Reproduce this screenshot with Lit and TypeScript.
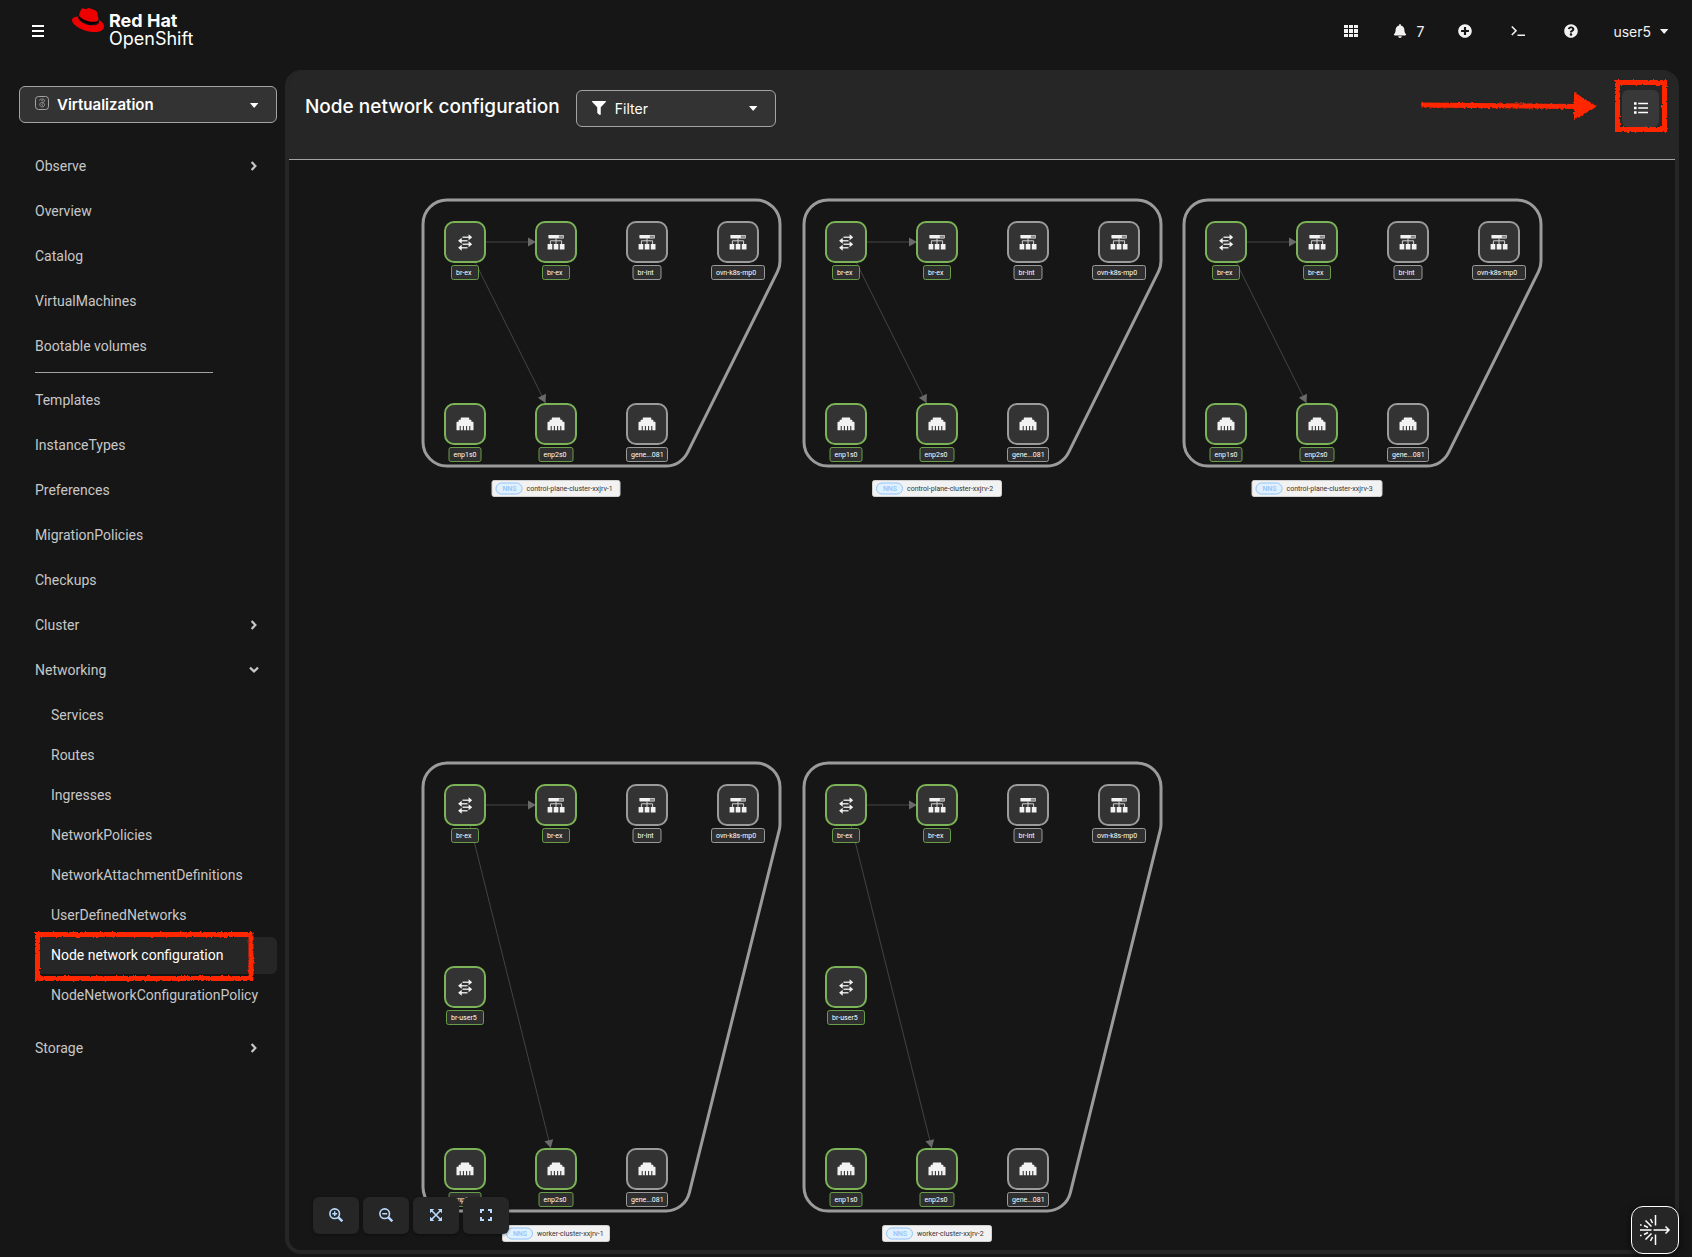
import { LitElement, html, svg, css } from "lit";
import { customElement, property } from "lit/decorators.js";
import { classMap } from "lit/directives/class-map.js";

type IconName =
  | "bars" | "grid" | "bell" | "plus" | "terminal" | "help" | "caret" | "chevron"
  | "filter" | "list" | "zoomIn" | "zoomOut" | "expand" | "fullscreen" | "virtualization" | "burst";

const ICONS: Record<IconName, { box: string; body: unknown }> = {
  bars: { box: "0 0 14 14", body: svg`<path d="M1 2h12M1 7h12M1 12h12" stroke="currentColor" stroke-width="2"/>` },
  grid: {
    box: "0 0 14 14",
    body: svg`<path fill="currentColor" d="M0 1h4v3H0zM5 1h4v3H5zM10 1h4v3h-4zM0 5h4v4H0zM5 5h4v4H5zM10 5h4v4h-4zM0 10h4v3H0zM5 10h4v3H5zM10 10h4v3h-4z"/>`,
  },
  bell: {
    box: "0 0 448 512",
    body: svg`<path fill="currentColor" d="M224 512c35.300 0 64-28.700 64-64H160c0 35.300 28.600 64 64 64zm215.400-149.700c-19.300-20.800-55.500-52-55.500-154.300 0-77.700-54.500-139.900-127.900-155.200V32c0-17.700-14.300-32-32-32s-32 14.300-32 32v20.800C118.600 68.100 64.100 130.300 64.100 208c0 102.300-36.200 133.500-55.500 154.300-6 6.400-8.700 14.100-8.600 21.700.1 16.400 13 32 32.100 32h383.800c19.100 0 32-15.600 32.100-32 .1-7.600-2.600-15.300-8.600-21.700z"/>`,
  },
  plus: {
    box: "0 0 512 512",
    body: svg`<path fill="currentColor" d="M256 8C119 8 8 119 8 256s111 248 248 248 248-111 248-248S393 8 256 8zm144 276c0 6.600-5.400 12-12 12h-92v92c0 6.600-5.400 12-12 12h-56c-6.600 0-12-5.400-12-12v-92h-92c-6.600 0-12-5.400-12-12v-56c0-6.600 5.400-12 12-12h92v-92c0-6.600 5.400-12 12-12h56c6.600 0 12 5.400 12 12v92h92c6.600 0 12 5.400 12 12v56z"/>`,
  },
  terminal: {
    box: "0 0 14 14",
    body: svg`<path d="M.8 2.500 5 6.700.8 11M6.500 11.300H14" fill="none" stroke="currentColor" stroke-width="1.600"/>`,
  },
  help: {
    box: "0 0 512 512",
    body: svg`<path fill="currentColor" d="M504 256c0 137-111 248-248 248S8 393 8 256C8 119.100 119 8 256 8s248 111.100 248 248zM262.700 90c-54.500 0-89.300 23-116.500 63.800-3.500 5.300-2.400 12.400 2.700 16.300l34.700 26.300c5.200 3.900 12.600 3 16.700-2.100 17.900-22.700 30.100-35.800 57.300-35.800 20.400 0 45.700 13.100 45.700 33 0 15-12.400 22.700-32.500 34C247.100 238.500 216 254.900 216 296v4c0 6.600 5.400 12 12 12h56c6.600 0 12-5.400 12-12v-1.300c0-28.500 83.200-29.600 83.200-106.700 0-58-60.200-102-116.500-102zM256 338c-25.400 0-46 20.600-46 46 0 25.400 20.600 46 46 46s46-20.600 46-46c0-25.400-20.600-46-46-46z"/>`,
  },
  caret: { box: "0 0 14 14", body: svg`<path d="M3 5h8.400L7.800 9.300a.9.9 0 0 1-1.300 0z" fill="currentColor"/>` },
  chevron: {
    box: "0 0 14 14",
    body: svg`<path d="M4.600 3 8.400 7l-3.800 4" fill="none" stroke="currentColor" stroke-width="2.200"/>`,
  },
  filter: {
    box: "0 0 512 512",
    body: svg`<path fill="currentColor" d="M487.976 0H24.028C2.710 0-8.047 25.866 7.058 40.971L192 225.941V432c0 7.831 3.821 15.170 10.237 19.662l80 55.980C298.020 518.690 320 507.493 320 487.980V225.941l184.947-184.970C520.021 25.896 509.338 0 487.976 0z"/>`,
  },
  list: {
    box: "0 0 14 14",
    body: svg`<path d="M0 2.500h2.600M0 7h2.600M0 11.500h2.600" stroke="currentColor" stroke-width="2.600"/><path d="M4.200 2.500H14M4.200 7H14M4.200 11.500H14" stroke="currentColor" stroke-width="1.600"/>`,
  },
  zoomIn: {
    box: "0 0 14 14",
    body: svg`<path d="M9.400 9.400 13.300 13.300" stroke="currentColor" stroke-width="2.400"/><circle cx="5.700" cy="5.700" r="4.800" fill="none" stroke="currentColor" stroke-width="1.600"/><path d="M5.700 3.300v4.800M3.300 5.700h4.800" stroke="currentColor" stroke-width="1.400"/>`,
  },
  zoomOut: {
    box: "0 0 14 14",
    body: svg`<path d="M9.400 9.400 13.300 13.300" stroke="currentColor" stroke-width="2.400"/><circle cx="5.700" cy="5.700" r="4.800" fill="none" stroke="currentColor" stroke-width="1.600"/><path d="M3.300 5.700h4.800" stroke="currentColor" stroke-width="1.600"/>`,
  },
  expand: {
    box: "0 0 14 14",
    body: svg`<path d="M1 5.300V1h4.300zM8.700 1H13v4.300zM1 8.700V13h4.300zM8.700 13H13V8.700z" fill="currentColor"/><path d="m2.500 2.500 9 9M11.500 2.500l-9 9" stroke="currentColor" stroke-width="1.600"/>`,
  },
  fullscreen: {
    box: "0 0 14 14",
    body: svg`<path d="M2 5V2h3M9 2h3v3M12 9v3H9M5 12H2V9" fill="none" stroke="currentColor" stroke-width="2"/>`,
  },
  virtualization: {
    box: "0 0 14 14",
    body: svg`<g fill="none" stroke="currentColor"><rect x=".5" y=".5" width="13" height="13" rx="3" stroke-width="1"/><path d="M4.500 4.500c0-1 1-1.500 2.500-1.500s2.600.6 2.600 1.700S8.500 6 7 6.400 4.600 7.200 4.800 8.600 6 11 7.300 10.900s2.300-1 2.200-2.400S8.400 6.900 7.400 7.800 7 9.700 8 9.500M6.300 4.600h1.500" stroke-width=".8"/></g>`,
  },
  burst: {
    box: "0 0 32 32",
    body: svg`<g fill="none" stroke="currentColor" stroke-width="1.500"><path d="M16.500 1v10.500M16.500 20.500V31M14.500 16h15M26.500 12.500 30 16l-3.500 3.500M1 16h11.500M6.500 6.500l6 6M6.500 25.500l6-6M11.500 5l2 4M11.500 27l2-4M5 11.500l4 2M5 20.500l4-2"/><path d="M1 11h1.600M1 21.500h1.600"/></g>`,
  },
};

@customElement("ui-icon")
class UiIcon extends LitElement {
  @property() name: IconName = "bars";

  static styles = css`
    :host { display: inline-flex; width: 14px; height: 14px; flex: none; }
    .glyph { width: 100%; height: 100%; display: block; }
  `;

  render() {
    const icon = ICONS[this.name];
    return html`<svg class="glyph" viewBox=${icon.box} aria-hidden="true">${icon.body}</svg>`;
  }
}

type Kind = "bridge" | "interface" | "ethernet";
interface NetNode { col: number; row: number; kind: Kind; label: string; width: number; up: boolean }
interface NetGroup { name: string; x: number; y: number; rows: number; labelWidth: number; nodes: NetNode[] }

const COL = 91;
const ROW = 182;

const buildNodes = (rows: number): NetNode[] => [
  { col: 0, row: 0, kind: "bridge", label: "br-ex", width: 28, up: true },
  { col: 1, row: 0, kind: "interface", label: "br-ex", width: 28, up: true },
  { col: 2, row: 0, kind: "interface", label: "br-int", width: 29, up: false },
  { col: 3, row: 0, kind: "interface", label: "ovn-k8s-mp0", width: 54, up: false },
  ...(rows > 2 ? [{ col: 0, row: 1, kind: "bridge" as Kind, label: "br-user5", width: 38, up: true }] : []),
  { col: 0, row: rows - 1, kind: "ethernet", label: "enp1s0", width: 33, up: true },
  { col: 1, row: rows - 1, kind: "ethernet", label: "enp2s0", width: 35, up: true },
  { col: 2, row: rows - 1, kind: "ethernet", label: "gene...081", width: 42, up: false },
];

const GROUPS: NetGroup[] = [
  { name: "control-plane-cluster-xxjrv-1", x: 176, y: 82, rows: 2, labelWidth: 129, nodes: buildNodes(2) },
  { name: "control-plane-cluster-xxjrv-2", x: 557, y: 82, rows: 2, labelWidth: 130, nodes: buildNodes(2) },
  { name: "control-plane-cluster-xxjrv-3", x: 937, y: 82, rows: 2, labelWidth: 131, nodes: buildNodes(2) },
  { name: "worker-cluster-xxjrv-1", x: 176, y: 645, rows: 3, labelWidth: 108, nodes: buildNodes(3) },
  { name: "worker-cluster-xxjrv-2", x: 557, y: 645, rows: 3, labelWidth: 110, nodes: buildNodes(3) },
];

@customElement("topology-graph")
class TopologyGraph extends LitElement {
  static styles = css`
    :host { display: block; flex: 1; min-height: 0; overflow: hidden; }
    .canvas { display: block; width: 100%; height: 100%; }
    .hull { fill: none; stroke: #9b9b9b; stroke-width: 3; }
    .edge { stroke: #444; stroke-width: 1; }
    .arrow { fill: #6a6a6a; }
    .box { fill: #333; stroke: #9b9b9b; stroke-width: 2; }
    .tag { fill: #2f2f2f; stroke: #9b9b9b; stroke-width: 1; }
    .up .box { stroke: #7cb356; }
    .up .tag { stroke: #6a9d48; }
    .shape { fill: #f2f2f2; }
    .dim { fill: #8c8c8c; }
    .wire { fill: none; stroke: #d0d0d0; stroke-width: 1; }
    .arrows { fill: none; stroke: #d8d8d8; stroke-width: 1.4; }
    .tag-text { fill: #fff; font: 400 7px Roboto, "Liberation Sans", sans-serif; }
    .name-bg { fill: #f2f2f2; stroke: #d0d0d0; stroke-width: 1; }
    .name-text { fill: #333; font: 400 7px Roboto, "Liberation Sans", sans-serif; }
    .pill { fill: #e0f0ff; stroke: #92c5f9; stroke-width: 1; }
    .pill-text { fill: #92c5f9; font: 500 7px Roboto, "Liberation Sans", sans-serif; text-anchor: middle; }
  `;

  private shape(kind: Kind) {
    if (kind === "bridge") {
      return svg`
        <path class="arrows" d="M-2.500-4.800H4.500M-4.500-1.300H2.500M-2.500 2.300H4.500M-4.500 5.800H2.500"/>
        <path class="shape" d="M3.600-7.800 7.200-4.800 3.600-1.800zM-3.300-4.300-6.900-1.300-3.300 1.700zM3.600-.7 7.200 2.300 3.600 5.300zM-3.300 2.800-6.900 5.800-3.300 8.800z"/>`;
    }
    if (kind === "interface") {
      return svg`
        <rect class="shape" x="-7.600" y="-7" width="15.400" height="3.400" rx=".6"/>
        <rect class="dim" x="2.800" y="-6.500" width="4.500" height="2.400"/>
        <path class="wire" d="M0-3.600V2.500M-5.600 2.500V-1.200H5.600V2.500"/>
        <path class="shape" d="M-8.400 2h4.700v5.600h-4.700zM-2.300 2h4.700v5.600h-4.700zM3.800 2h4.700v5.600H3.800z"/>`;
    }
    return svg`<path class="shape" transform="translate(-8.500 -8.500) scale(.0332)"
      d="M496 192h-48v-48c0-8.800-7.200-16-16-16h-48V80c0-8.800-7.200-16-16-16H144c-8.800 0-16 7.200-16 16v48H80c-8.800 0-16 7.200-16 16v48H16c-8.800 0-16 7.200-16 16v224c0 8.800 7.200 16 16 16h80V320h32v128h64V320h32v128h64V320h32v128h64V320h32v128h80c8.800 0 16-7.200 16-16V208c0-8.800-7.200-16-16-16z"/>`;
  }

  private hull(rows: number) {
    // Points of the convex outline; each is padded outwards by the corner radius.
    const r = 24;
    const left = -18, top = -18, right = 291, rightY = 19, foot = 201;
    const bottom = (rows - 1) * ROW + 18;
    const dx = foot - right, dy = bottom - rightY;
    const len = Math.hypot(dx, dy);
    const nx = (dy / len) * r, ny = (-dx / len) * r;
    return `M${left - r} ${top}A${r} ${r} 0 0 1 ${left} ${top - r}H${right}A${r} ${r} 0 0 1 ${right + r} ${top}V${rightY}` +
      `A${r} ${r} 0 0 1 ${right + nx} ${rightY + ny}L${foot + nx} ${bottom + ny}A${r} ${r} 0 0 1 ${foot} ${bottom + r}` +
      `H${left}A${r} ${r} 0 0 1 ${left - r} ${bottom}Z`;
  }

  private group(g: NetGroup) {
    const bottom = (g.rows - 1) * ROW;
    const tipY = bottom - 21;
    const tipX = (COL * tipY) / bottom;
    const angle = (Math.atan2(bottom, COL) * 180) / Math.PI;
    const labelX = COL - g.labelWidth / 2;
    return svg`
      <g transform="translate(${g.x} ${g.y})">
        <path class="hull" d=${this.hull(g.rows)}/>
        <path class="edge" d="M0 0H${COL - 24}M0 0L${tipX} ${tipY}"/>
        <path class="arrow" d="M0 0-8-4.500V4.500z" transform="translate(${COL - 20} 0)"/>
        <path class="arrow" d="M0 0-8-4.500V4.500z" transform="translate(${tipX} ${tipY}) rotate(${angle})"/>
        ${g.nodes.map((n) => svg`
          <g class=${n.up ? "up" : "down"} transform="translate(${n.col * COL} ${n.row * ROW})">
            <rect class="box" x="-20" y="-20" width="40" height="40" rx="9"/>
            ${this.shape(n.kind)}
            <rect class="tag" x=${-n.width / 2 + 0.5} y="23.500" width=${n.width - 1} height="14" rx="2"/>
            <text class="tag-text" x=${-n.width / 2 + 5} y="33">${n.label}</text>
          </g>`)}
        <g transform="translate(${labelX} ${bottom + 56})">
          <rect class="name-bg" x=".5" y=".5" width=${g.labelWidth - 1} height="16" rx="2"/>
          <rect class="pill" x="4.500" y="3" width="26" height="11" rx="5.500"/>
          <text class="pill-text" x="18" y="11">NNS</text>
          <text class="name-text" x="35" y="11">${g.name}</text>
        </g>
      </g>`;
  }

  render() {
    return html`<svg class="canvas" role="img" aria-label="Node network topology">${GROUPS.map((g) => this.group(g))}</svg>`;
  }
}

interface NavItem { label: string; chevron?: "right" | "down"; children?: string[]; divider?: boolean }

const NAV: NavItem[] = [
  { label: "Observe", chevron: "right" },
  { label: "Overview" },
  { label: "Catalog" },
  { label: "VirtualMachines" },
  { label: "Bootable volumes", divider: true },
  { label: "Templates" },
  { label: "InstanceTypes" },
  { label: "Preferences" },
  { label: "MigrationPolicies" },
  { label: "Checkups" },
  { label: "Cluster", chevron: "right" },
  {
    label: "Networking",
    chevron: "down",
    children: [
      "Services", "Routes", "Ingresses", "NetworkPolicies", "NetworkAttachmentDefinitions",
      "UserDefinedNetworks", "Node network configuration", "NodeNetworkConfigurationPolicy",
    ],
  },
  { label: "Storage", chevron: "right" },
];

@customElement("app-root")
class AppRoot extends LitElement {
  static styles = css`
    :host {
      display: grid;
      grid-template: 70px 1fr / 285px minmax(0, 1fr);
      min-height: 100vh;
      background: #161616;
      color: #fff;
      font: 400 14px/21px Inter, "Liberation Sans", sans-serif;
      box-sizing: border-box;
      padding: 0 13px 3px 0;
      position: relative;
    }
    button { font: inherit; color: inherit; border: 0; background: none; padding: 0; margin: 0; cursor: pointer; }
    a { color: inherit; text-decoration: none; }
    * { box-sizing: border-box; }

    .masthead { grid-column: 1 / -1; display: flex; align-items: flex-start; padding-left: 31px; }
    .menu { display: flex; padding: 24px 0; }
    .brand { display: flex; gap: 5px; padding: 4px 0 0 27px; }
    .hat { width: 32px; height: 32px; flex: none; }
    .brand-text { display: flex; flex-direction: column; padding-top: 8px; font-size: 18px; line-height: 18px; }
    .brand-name { font-weight: 700; }
    .tools { display: flex; align-items: center; gap: 39px; margin-left: auto; padding: 20px 8px 0 0; }
    .tool { display: flex; align-items: center; height: 22px; gap: 9px; color: #f2f2f2; }
    .bell { width: 28px; margin-right: -2px; margin-left: -4px; }
    .user { margin-left: -4px; gap: 6px; }

    .sidebar { padding: 16px 8px 0 19px; }
    .perspective {
      display: flex; align-items: center; width: 100%; height: 37px; padding: 0 15px;
      border: 1px solid #a3a3a3; border-radius: 6px; background: #333; font-size: 15px; font-weight: 600; gap: 8px;
    }
    .perspective-icon { color: #a3a3a3; margin-bottom: 4px; }
    .end { margin-left: auto; }
    .nav-list { list-style: none; margin: 0; padding: 0; display: flex; flex-direction: column; gap: 8px; }
    .nav { padding-top: 25px; font-family: Roboto, "Liberation Sans", sans-serif; }
    .nav-link { display: flex; align-items: center; height: 37px; padding: 0 16px; color: #c7c7c7; width: 100%; text-align: left; }
    .nav-chevron { margin: 0 0 2px auto; }
    .down { transform: rotate(90deg); }
    .divider { width: 178px; margin: 7px 0 1px 16px; border: 0; border-top: 1px solid #a3a3a3; }
    .sub { list-style: none; margin: 8px 0 8px 16px; padding: 0; display: flex; flex-direction: column; gap: 3px; }
    .sub-item { position: relative; }
    .sub-link { display: flex; align-items: center; height: 37px; padding: 0 0 0 16px; border-radius: 6px; color: #c7c7c7; white-space: nowrap; }
    .current { background: #262626; color: #fff; }

    .marker { position: absolute; overflow: visible; pointer-events: none; }
    .marker-shape { fill: none; stroke: #ff2600; stroke-width: 5; }
    .marker-fill { fill: #ff2600; }
    .nav-marker { left: 0; top: -5px; width: 219px; height: 49px; }

    .panel {
      display: flex; flex-direction: column; border: 4px solid #262626; border-top: 0; border-radius: 16px;
      overflow: hidden; background: #161616; position: relative; min-height: 0;
    }
    .toolbar {
      display: flex; align-items: flex-start; gap: 16px; height: 90px; padding: 20px 16px 0; flex: none;
      background: #262626; border-bottom: 1px solid #a3a3a3;
    }
    .title { margin: 0; font-size: 19px; line-height: 34px; font-weight: 500; white-space: nowrap; }
    .filter {
      display: flex; align-items: center; gap: 9px; width: 200px; height: 37px; padding: 0 15px 1px;
      border: 1px solid #a3a3a3; border-radius: 6px; background: #333;
    }
    .view { position: relative; margin-left: auto; }
    .view-button { display: flex; align-items: center; justify-content: center; width: 37px; height: 37px; padding-bottom: 1px; border-radius: 6px; background: #383838; }
    .view-marker { left: -7px; top: -10px; width: 52px; height: 52px; }
    .arrow-marker { left: -201px; top: 2px; width: 176px; height: 28px; }

    .controls { position: absolute; left: 24px; bottom: 16px; display: flex; gap: 4px; }
    .control {
      display: flex; align-items: center; justify-content: center; width: 46px; height: 37px; padding-bottom: 1px; border-radius: 6px;
      background: #262626; color: #b9dafc; box-shadow: 0 1px 3px #0006;
    }
    .assistant {
      position: absolute; right: 13px; bottom: 3px; width: 48px; height: 48px; display: flex; align-items: center; justify-content: center;
      border: 1px solid #fff; border-radius: 12px; background: #262626; box-shadow: 0 2px 8px #000a;
    }
    .assistant-icon { width: 32px; height: 32px; }
  `;

  private rough(id: string) {
    return svg`<filter id=${id} x="-10%" y="-20%" width="120%" height="140%">
      <feTurbulence type="fractalNoise" baseFrequency=".4" numOctaves="2" seed="4" result="n"/>
      <feDisplacementMap in="SourceGraphic" in2="n" scale="3" xChannelSelector="R" yChannelSelector="G"/>
    </filter>`;
  }

  private navItem(item: NavItem) {
    const inner = html`<span>${item.label}</span>${item.chevron
      ? html`<ui-icon name="chevron" class=${classMap({ "nav-chevron": true, down: item.chevron === "down" })}></ui-icon>`
      : ""}`;
    return html`<li>
      ${item.chevron
        ? html`<button class="nav-link" type="button" aria-expanded=${item.children ? "true" : "false"}>${inner}</button>`
        : html`<a class="nav-link" href="#">${inner}</a>`}
      ${item.divider ? html`<hr class="divider" />` : ""}
      ${item.children ? html`<ul class="sub">${item.children.map((c) => this.subItem(c))}</ul>` : ""}
    </li>`;
  }

  private subItem(label: string) {
    const current = label === "Node network configuration";
    return html`<li class="sub-item">
      <a class=${classMap({ "sub-link": true, current })} href="#" aria-current=${current ? "page" : "false"}>${label}</a>
      ${current
        ? html`<svg class="marker nav-marker" viewBox="0 0 219 49" aria-hidden="true">
            ${this.rough("rough-nav")}
            <rect class="marker-shape" x="2.500" y="2.500" width="213.500" height="44" filter="url(#rough-nav)"/>
          </svg>`
        : ""}
    </li>`;
  }

  render() {
    return html`
      <header class="masthead">
        <button class="menu" type="button" aria-label="Toggle navigation"><ui-icon name="bars"></ui-icon></button>
        <a class="brand" href="#">
          <svg class="hat" viewBox="0 0 24 24" aria-hidden="true"><path d="M5 8h14l.5 6-6 1.500L5 11z" fill="#000"/><path fill="#e00" d="M16.009 13.386c1.577 0 3.860-.326 3.860-2.202a1.765 1.765 0 0 0-.040-.431l-.940-4.080c-.216-.898-.406-1.305-1.982-2.093-1.223-.625-3.888-1.658-4.676-1.658-.733 0-.947.946-1.822.946-.842 0-1.467-.706-2.255-.706-.757 0-1.250.515-1.630 1.576 0 0-1.060 2.990-1.197 3.424a.81.81 0 0 0-.028.245c0 1.162 4.577 4.974 10.710 4.974m4.101-1.435c.218 1.032.218 1.140.218 1.277 0 1.765-1.984 2.745-4.593 2.745-5.895.004-11.060-3.451-11.060-5.734a2.326 2.326 0 0 1 .190-.925C2.746 9.415 0 9.794 0 12.217c0 3.969 9.405 8.861 16.851 8.861 5.710 0 7.149-2.582 7.149-4.620 0-1.605-1.387-3.425-3.887-4.512"/></svg>
          <span class="brand-text"><span class="brand-name">Red Hat</span><span>OpenShift</span></span>
        </a>
        <div class="tools">
          <button class="tool" type="button" aria-label="Applications"><ui-icon name="grid"></ui-icon></button>
          <button class="tool bell" type="button" aria-label="Notifications"><ui-icon name="bell"></ui-icon><span>7</span></button>
          <button class="tool" type="button" aria-label="Quick create"><ui-icon name="plus"></ui-icon></button>
          <button class="tool" type="button" aria-label="Command line"><ui-icon name="terminal"></ui-icon></button>
          <button class="tool" type="button" aria-label="Help"><ui-icon name="help"></ui-icon></button>
          <button class="tool user" type="button"><span>user5</span><ui-icon name="caret"></ui-icon></button>
        </div>
      </header>

      <aside class="sidebar">
        <button class="perspective" type="button">
          <ui-icon class="perspective-icon" name="virtualization"></ui-icon><span>Virtualization</span>
          <ui-icon class="end" name="caret"></ui-icon>
        </button>
        <nav class="nav" aria-label="Main"><ul class="nav-list">${NAV.map((i) => this.navItem(i))}</ul></nav>
      </aside>

      <main class="panel">
        <div class="toolbar">
          <h1 class="title">Node network configuration</h1>
          <button class="filter" type="button"><ui-icon name="filter"></ui-icon><span>Filter</span><ui-icon class="end" name="caret"></ui-icon></button>
          <div class="view">
            <button class="view-button" type="button" aria-label="List view"><ui-icon name="list"></ui-icon></button>
            <svg class="marker view-marker" viewBox="0 0 52 52" aria-hidden="true">
              ${this.rough("rough-view")}
              <rect class="marker-shape" x="2.500" y="2.500" width="47" height="47" filter="url(#rough-view)"/>
            </svg>
            <svg class="marker arrow-marker" viewBox="0 0 176 28" aria-hidden="true">
              ${this.rough("rough-arrow")}
              <g filter="url(#rough-arrow)">
                <path class="marker-shape" d="M0 13 156 14.500"/>
                <path class="marker-fill" d="M153 0 176 14.500 153 28z"/>
              </g>
            </svg>
          </div>
        </div>
        <topology-graph></topology-graph>
        <div class="controls">
          <button class="control" type="button" aria-label="Zoom in"><ui-icon name="zoomIn"></ui-icon></button>
          <button class="control" type="button" aria-label="Zoom out"><ui-icon name="zoomOut"></ui-icon></button>
          <button class="control" type="button" aria-label="Fit to screen"><ui-icon name="expand"></ui-icon></button>
          <button class="control" type="button" aria-label="Reset view"><ui-icon name="fullscreen"></ui-icon></button>
        </div>
      </main>
      <button class="assistant" type="button" aria-label="Assistant"><ui-icon class="assistant-icon" name="burst"></ui-icon></button>
    `;
  }
}
